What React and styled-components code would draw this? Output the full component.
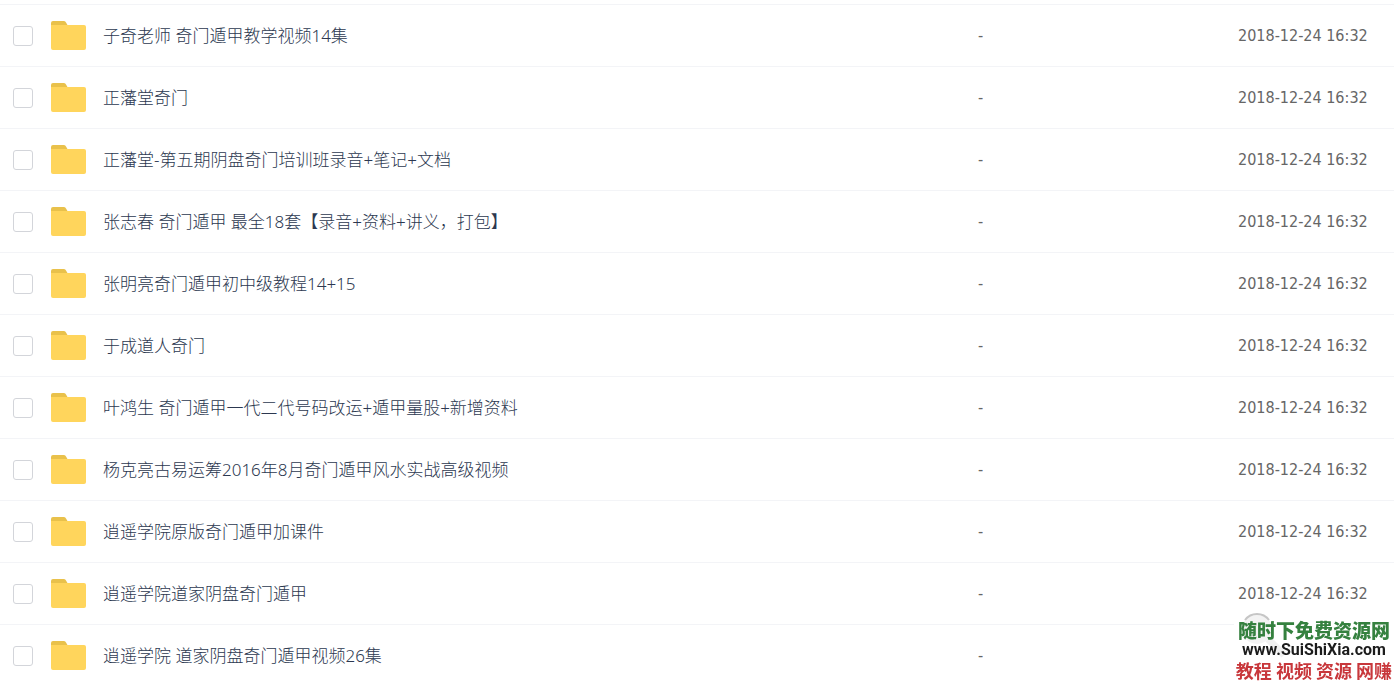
import React, { useState } from "react";
import styled, { createGlobalStyle } from "styled-components";

const GlobalStyle = createGlobalStyle`
  body {
    margin: 0;
    background: #fff;
    font-family: "Noto Sans", "Noto Sans CJK SC", sans-serif;
  }
`;

const Page = styled.main`
  height: 100vh;
  box-sizing: border-box;
  padding-top: 4px;
  overflow-y: auto;
  scrollbar-width: none;
`;

const FileTable = styled.table`
  width: 100%;
  table-layout: fixed;
  border-collapse: collapse;
`;

const Row = styled.tr`
  height: 62px;
  border-top: 1px solid #f3f4f7;
`;

const Cell = styled.td`
  width: ${({ $width }) => $width || "auto"};
  padding: 0;
  color: #666;
  font-family: "DejaVu Sans Condensed", "Noto Sans", sans-serif;
  font-size: 16px;
  line-height: 24px;
  white-space: nowrap;
`;

const CheckCell = styled(Cell)`
  padding-left: 13px;
`;

const Checkbox = styled.input`
  appearance: none;
  display: block;
  width: 20px;
  height: 20px;
  margin: 0;
  border: 1px solid #d3d5da;
  border-radius: 3px;
  background: #fff;

  &:checked {
    background: #3b8cff;
    border-color: #3b8cff;
  }
`;

const NameLink = styled.a`
  display: flex;
  align-items: center;
  gap: 17px;
  color: #2c3850;
  font-family: "Noto Sans", "Noto Sans CJK SC", sans-serif;
  font-size: 17px;
  font-weight: 300;
  text-decoration: none;
`;

const Watermark = styled.aside`
  position: fixed;
  right: 0;
  bottom: 0;
  display: flex;
  flex-direction: column;
  align-items: center;
  width: 160px;
  padding-bottom: 3px;
  background: #fff;
  white-space: nowrap;
`;

const Lens = styled.svg`
  position: absolute;
  top: -8px;
  left: 8px;
`;

const SiteName = styled.strong`
  position: relative;
  color: #35813f;
  font-family: "Noto Sans CJK SC", sans-serif;
  font-size: 19px;
  font-weight: 900;
  line-height: 20px;
`;

const SiteUrl = styled.strong`
  position: relative;
  color: #1c1c1c;
  font-family: Roboto, sans-serif;
  font-size: 16px;
  font-weight: 700;
  line-height: 20px;
`;

const SiteTags = styled.strong`
  position: relative;
  color: #c8373b;
  font-family: "Noto Sans CJK SC", sans-serif;
  font-size: 18px;
  font-weight: 700;
  line-height: 20px;
`;

const DATE = "2018-12-24 16:32";

const FILES = [
  { name: "子奇老师 奇门遁甲教学视频14集", date: DATE },
  { name: "正藩堂奇门", date: DATE },
  { name: "正藩堂-第五期阴盘奇门培训班录音+笔记+文档", date: DATE },
  { name: "张志春 奇门遁甲 最全18套【录音+资料+讲义，打包】", date: DATE },
  { name: "张明亮奇门遁甲初中级教程14+15", date: DATE },
  { name: "于成道人奇门", date: DATE },
  { name: "叶鸿生 奇门遁甲一代二代号码改运+遁甲量股+新增资料", date: DATE },
  { name: "杨克亮古易运筹2016年8月奇门遁甲风水实战高级视频", date: DATE },
  { name: "逍遥学院原版奇门遁甲加课件", date: DATE },
  { name: "逍遥学院道家阴盘奇门遁甲", date: DATE },
  { name: "逍遥学院 道家阴盘奇门遁甲视频26集" },
];

function FolderIcon() {
  return (
    <svg width="35" height="30" viewBox="0 0 35 30" aria-hidden="true">
      <path d="M0 2a2 2 0 0 1 2-2h11q1.500 0 2 1.500L16.500 4v4H0z" fill="#e9c14b" />
      <path d="M0 4h33a2 2 0 0 1 2 2v21a2 2 0 0 1-2 2H2a2 2 0 0 1-2-2z" fill="#ffd55c" />
    </svg>
  );
}

function FileRow({ name, date }) {
  const [checked, setChecked] = useState(false);

  return (
    <Row>
      <CheckCell $width="38px">
        <Checkbox
          type="checkbox"
          aria-label={name}
          checked={checked}
          onChange={() => setChecked(!checked)}
        />
      </CheckCell>
      <Cell>
        <NameLink href="#">
          <FolderIcon />
          {name}
        </NameLink>
      </Cell>
      <Cell $width="260px">-</Cell>
      <Cell $width="156px">{date}</Cell>
    </Row>
  );
}

export default function App() {
  return (
    <Page>
      <GlobalStyle />
      <FileTable>
        <tbody>
          {FILES.map((file) => (
            <FileRow key={file.name} name={file.name} date={file.date} />
          ))}
        </tbody>
      </FileTable>
      <Watermark>
        <Lens width="50" height="50" viewBox="0 0 50 50" aria-hidden="true">
          <circle cx="15" cy="17" r="15" fill="#f3f3f3" />
          <path d="M3 8a15 15 0 0 1 24 0" fill="none" stroke="#c6c6c6" strokeWidth="2" />
          <path d="M26 27l16 16" stroke="#f0f0f0" strokeWidth="7" />
        </Lens>
        <SiteName>随时下免费资源网</SiteName>
        <SiteUrl>www.SuiShiXia.com</SiteUrl>
        <SiteTags>教程 视频 资源 网赚</SiteTags>
      </Watermark>
    </Page>
  );
}
